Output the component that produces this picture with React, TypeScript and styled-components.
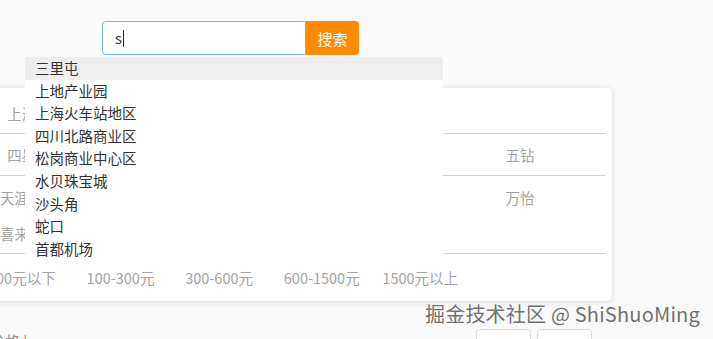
import styled, { createGlobalStyle } from 'styled-components';

const GlobalStyle = createGlobalStyle`
  html, body {
    margin: 0;
    padding: 0;
    background: #fafafa;
    overflow: hidden;
  }
  body {
    font-family: "Noto Sans", "Noto Sans CJK SC", sans-serif;
    font-size: 14.5px;
  }
`;

const Page = styled.div`
  position: relative;
  width: 713px;
  height: 339px;
  overflow: hidden;
`;

const SearchBar = styled.div`
  display: flex;
  padding-top: 21px;
  margin-left: 102px;
`;

const SearchBox = styled.div`
  box-sizing: border-box;
  width: 204px;
  height: 34px;
  border: 1px solid #7db6e8;
  border-radius: 4px 0 0 4px;
  background: #fff;
  display: flex;
  align-items: center;
  padding-left: 12px;
  color: #333;
  font-size: 14.5px;
`;

const Caret = styled.span`
  display: inline-block;
  width: 1px;
  height: 17px;
  background: #222;
  margin-left: 1px;
`;

const SearchButton = styled.button`
  width: 53px;
  height: 34px;
  border: none;
  border-radius: 0 4px 4px 0;
  background: #ff8a00;
  color: #fff;
  font-family: "Noto Sans CJK SC", sans-serif;
  font-size: 15px;
  padding: 0;
`;

const Suggest = styled.ul`
  position: absolute;
  top: 57px;
  left: 25px;
  width: 418px;
  margin: 0;
  padding: 0;
  list-style: none;
  background: #fff;
  z-index: 2;
`;

const SuggestItem = styled.li<{ $active?: boolean }>`
  height: 22.6px;
  line-height: 22.6px;
  padding-left: 10px;
  color: #333;
  font-family: "Noto Sans CJK SC", sans-serif;
  font-size: 14.5px;
  background: ${p => (p.$active ? '#eeeeee' : 'transparent')};
`;

const Card = styled.div`
  box-sizing: border-box;
  margin-top: 33px;
  margin-left: -30px;
  width: 642px;
  padding: 5px 6px 0 10px;
  background: #fff;
  border-radius: 5px;
  box-shadow: 0 1px 6px rgba(0, 0, 0, 0.14);
`;

const FilterRow = styled.div<{ $height: number; $top?: number }>`
  box-sizing: border-box;
  display: grid;
  grid-template-columns: repeat(6, 98.2px);
  grid-auto-rows: 36px;
  align-content: ${p => (p.$top ? 'start' : 'center')};
  padding-top: ${p => p.$top ?? 0}px;
  height: ${p => p.$height + 1}px;
  border-bottom: 1px solid #d4d4d4;
  color: #a3a3a3;
  font-family: "Noto Sans CJK SC", sans-serif;
  font-size: 14.5px;
`;

const Cell = styled.span`
  display: flex;
  align-items: center;
  justify-content: center;
  white-space: nowrap;
`;

const PriceRow = styled.div`
  display: grid;
  grid-template-columns: repeat(5, 98.6px);
  align-items: center;
  height: 47px;
  padding-left: 8px;
  color: #a3a3a3;
  font-family: "Noto Sans CJK SC", sans-serif;
  font-size: 14.5px;
`;

const PriceCell = styled.span`
  white-space: nowrap;
`;

const Footer = styled.div`
  display: flex;
  align-items: flex-start;
  margin-top: 28px;
  margin-left: -9px;
  width: 601px;
`;

const FooterLabel = styled.span`
  margin-top: 2px;
  color: #888;
  font-family: "Noto Sans CJK SC", sans-serif;
  font-size: 14.5px;
  line-height: 20px;
`;

const PagerGroup = styled.div`
  display: flex;
  gap: 6px;
  margin-left: auto;
`;

const PagerButton = styled.button`
  width: 55px;
  height: 30px;
  border: 1px solid #dcdcdc;
  border-radius: 4px;
  background: #fff;
  color: #666;
  font-size: 14px;
  padding: 6px 0 0;
  line-height: 1;
`;

const Watermark = styled.div`
  position: absolute;
  right: 13px;
  top: 300px;
  color: #707070;
  font-family: "Noto Sans CJK SC", sans-serif;
  font-size: 20px;
  line-height: 28px;
  letter-spacing: 0.2px;
  text-shadow: 0 0 2px #fff, 0 0 2px #fff, 0 0 1px #fff;
  z-index: 3;
`;

const suggestions = [
  '三里屯',
  '上地产业园',
  '上海火车站地区',
  '四川北路商业区',
  '松岗商业中心区',
  '水贝珠宝城',
  '沙头角',
  '蛇口',
  '首都机场',
];

const prices = ['100元以下', '100-300元', '300-600元', '600-1500元', '1500元以上'];

export default function App() {
  return (
    <Page>
      <GlobalStyle />
      <SearchBar>
        <SearchBox>
          s<Caret />
        </SearchBox>
        <SearchButton>搜索</SearchButton>
      </SearchBar>
      <Suggest>
        {suggestions.map((s, i) => (
          <SuggestItem key={s} $active={i === 0}>
            {s}
          </SuggestItem>
        ))}
      </Suggest>
      <Card>
        <FilterRow $height={40}>
          <Cell>上海市</Cell>
        </FilterRow>
        <FilterRow $height={41}>
          <Cell>四星级</Cell>
          <Cell>三钻</Cell>
          <Cell>四钻</Cell>
          <Cell>五星级</Cell>
          <Cell>经济型</Cell>
          <Cell>五钻</Cell>
        </FilterRow>
        <FilterRow $height={77} $top={3}>
          <Cell>天涯酒店</Cell>
          <Cell>如家</Cell>
          <Cell>汉庭</Cell>
          <Cell>希尔顿</Cell>
          <Cell>洲际</Cell>
          <Cell>万怡</Cell>
          <Cell>喜来登店</Cell>
          <Cell>凯悦</Cell>
          <Cell>锦江</Cell>
        </FilterRow>
        <PriceRow>
          {prices.map(p => (
            <PriceCell key={p}>{p}</PriceCell>
          ))}
        </PriceRow>
      </Card>
      <Footer>
        <FooterLabel>价格 |</FooterLabel>
        <PagerGroup>
          <PagerButton>&lt;</PagerButton>
          <PagerButton>&gt;</PagerButton>
        </PagerGroup>
      </Footer>
      <Watermark>掘金技术社区 @ ShiShuoMing</Watermark>
    </Page>
  );
}
